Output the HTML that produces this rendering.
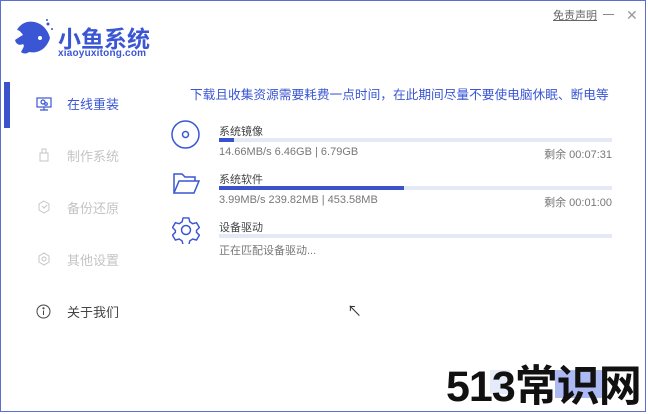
<!DOCTYPE html>
<html><head><meta charset="utf-8"><style>
*{margin:0;padding:0;box-sizing:border-box}
body{width:648px;height:413px;background:#fff;font-family:"Liberation Sans","Noto Sans CJK SC",sans-serif;position:relative;overflow:hidden}
.frame{position:absolute;left:0;top:0;width:646px;height:412px;border:1px solid #5b6fd2}
.a{position:absolute;white-space:nowrap}
.nav{font-size:13px;color:#c4c4c4}
.t{font-size:11px;color:#444}
.s{font-size:11px;color:#777}
.bar{position:absolute;left:219px;width:393px;height:4px;background:#e3eaf6}
.bar i{position:absolute;left:0;top:0;height:4px;background:#3a52cc}
</style></head><body>
<div class="frame"></div>
<svg class="a" style="left:13px;top:18px" width="40" height="40" viewBox="0 0 40 40">
<path d="M14 4 C24 2 34 8 37 20 C34 30 26 36 16 34 C14 36 10 36 8 34 C10 30 12 28 10 26 C6 28 3 26 2 22 C5 20 8 18 10 17 C8 14 6 12 4 12 C6 8 10 5 14 4Z" fill="#3a56d4"/>
<circle cx="27" cy="20" r="2" fill="#fff"/>
<circle cx="35" cy="6" r="1.5" fill="#3a56d4"/><circle cx="39" cy="11" r="1" fill="#3a56d4"/><circle cx="34" cy="2" r="1" fill="#3a56d4"/>
</svg>
<div class="a" style="left:58px;top:20px;font-size:23px;font-weight:bold;color:#3a56d4">小鱼系统</div>
<div class="a" style="left:58px;top:48px;font-size:10px;font-weight:bold;color:#3a56d4;letter-spacing:0.2px">xiaoyuxitong.com</div>
<div class="a" style="left:553px;top:7px;font-size:11px;color:#666;text-decoration:underline">免责声明</div>
<div class="a" style="left:603px;top:14px;width:11px;height:1px;background:#888"></div>
<div class="a" style="left:626px;top:7px;font-size:14px;color:#999">✕</div>
<div class="a" style="left:4px;top:82px;width:6px;height:46px;background:#3a52cc"></div>
<svg class="a" style="left:36px;top:97px" width="16" height="14" viewBox="0 0 16 14" fill="none" stroke="#3a56d4" stroke-width="1.2"><rect x="1" y="1" width="14" height="9"/><path d="M8 10v3M4 13h8"/><circle cx="7" cy="5" r="2"/><circle cx="10" cy="7" r="1.3"/></svg>
<div class="a nav" style="left:67px;top:94px;color:#3a56d4">在线重装</div>
<svg class="a" style="left:38px;top:148px" width="12" height="14" viewBox="0 0 12 14" fill="none" stroke="#c4c4c4"><rect x="2" y="5" width="8" height="8"/><rect x="4" y="1" width="4" height="4"/></svg>
<div class="a nav" style="left:67px;top:146px">制作系统</div>
<svg class="a" style="left:37px;top:200px" width="14" height="14" viewBox="0 0 14 14" fill="none" stroke="#c4c4c4"><path d="M7 1l5 3v6l-5 3-5-3V4z"/><path d="M5 6l2 2 3-3"/></svg>
<div class="a nav" style="left:67px;top:198px">备份还原</div>
<svg class="a" style="left:37px;top:252px" width="14" height="14" viewBox="0 0 14 14" fill="none" stroke="#c4c4c4"><path d="M7 1l5 3v6l-5 3-5-3V4z"/><circle cx="7" cy="7" r="2"/></svg>
<div class="a nav" style="left:67px;top:250px">其他设置</div>
<svg class="a" style="left:36px;top:304px" width="15" height="15" viewBox="0 0 15 15" fill="none" stroke="#444"><circle cx="7.5" cy="7.5" r="6.5"/><path d="M7.5 6.5v4.5"/><circle cx="7.5" cy="4.3" r=".6" fill="#444"/></svg>
<div class="a nav" style="left:67px;top:302px;color:#444">关于我们</div>
<div class="a" style="left:190px;top:84px;font-size:12.7px;color:#3a56d4">下载且收集资源需要耗费一点时间，在此期间尽量不要使电脑休眠、断电等</div>
<svg class="a" style="left:171px;top:120px" width="29" height="29" viewBox="0 0 29 29" fill="none" stroke="#3a56d4" stroke-width="1.5"><circle cx="14.5" cy="14.5" r="13.5"/><circle cx="14.5" cy="14.5" r="3"/></svg>
<div class="a t" style="left:219px;top:123px">系统镜像</div>
<div class="bar" style="top:138px"><i style="width:15px"></i></div>
<div class="a s" style="left:219px;top:146px">14.66MB/s 6.46GB | 6.79GB</div>
<div class="a s" style="right:36px;top:146px">剩余 00:07:31</div>
<svg class="a" style="left:172px;top:172px" width="28" height="23" viewBox="0 0 28 23" fill="none" stroke="#3a56d4" stroke-width="1.5"><path d="M2 21V2h8l3 3h10v4"/><path d="M2 21l5-12h20l-5 12z"/></svg>
<div class="a t" style="left:219px;top:171px">系统软件</div>
<div class="bar" style="top:186px"><i style="width:185px"></i></div>
<div class="a s" style="left:219px;top:194px">3.99MB/s 239.82MB | 453.58MB</div>
<div class="a s" style="right:36px;top:194px">剩余 00:01:00</div>
<svg class="a" style="left:172px;top:216px" width="28" height="28" viewBox="0 0 28 28" fill="none" stroke="#3a56d4" stroke-width="1.5"><path d="M11 2h6l1 4 3 2 4-1 3 5-3 3v2l3 3-3 5-4-1-3 2-1 4h-6l-1-4-3-2-4 1-3-5 3-3v-2L0 12l3-5 4 1 3-2z" transform="translate(0.5 0) scale(.96)"/><circle cx="14" cy="14" r="4.5"/></svg>
<div class="a t" style="left:219px;top:219px">设备驱动</div>
<div class="bar" style="top:234px"></div>
<div class="a s" style="left:219px;top:242px">正在匹配设备驱动...</div>
<div class="a" style="left:347px;top:300px;font-size:15px;color:#333">↖</div>
<div class="a" style="left:490px;top:370px;width:20px;height:24px;background:#e6ebfa"></div>
<div class="a" style="left:555px;top:370px;width:50px;height:28px;background:#5a74e6;opacity:.5"></div>
<div class="a" style="left:446px;top:352px;font-size:43px;font-weight:bold;color:#111;letter-spacing:-1px">513常识网</div>
</body></html>
